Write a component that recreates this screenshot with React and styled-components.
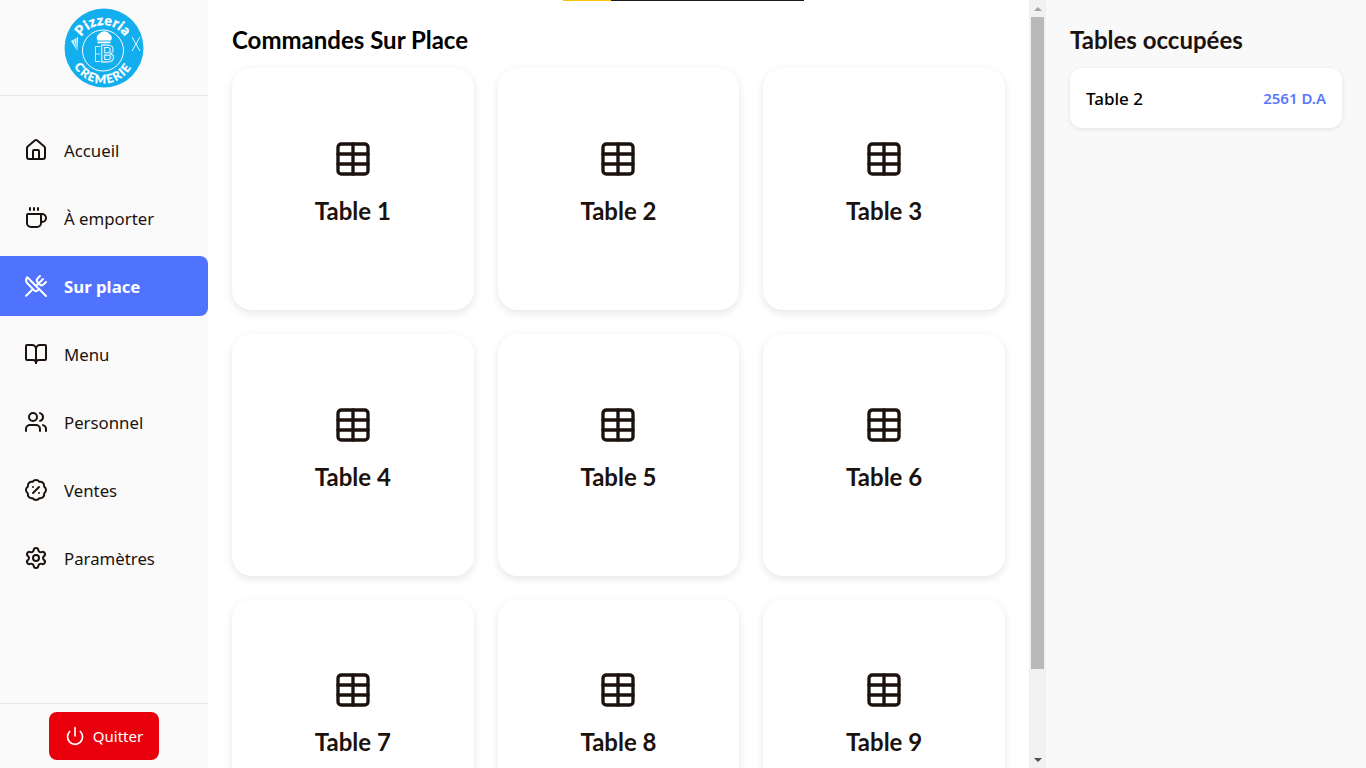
import styled, { createGlobalStyle } from 'styled-components';
import { House, Coffee, UtensilsCrossed, BookOpen, Users, BadgePercent, Settings, Power, Table } from 'lucide-react';

const GlobalStyle = createGlobalStyle`
    html, body {
        margin: 0;
        height: 100%;
        overflow: hidden;
        font-family: "Noto Sans", sans-serif;
        color: #1c120d;
    }
    * {
        box-sizing: border-box;
    }
`

const Page = styled.div`
    display: flex;
    width: 100vw;
    height: 100vh;
    overflow: hidden;
`

const Sidebar = styled.aside`
    width: 208px;
    flex-shrink: 0;
    display: flex;
    flex-direction: column;
    background: #fafafa;
`

const LogoBox = styled.div`
    height: 96px;
    display: flex;
    align-items: center;
    justify-content: center;
    padding-top: 1px;
    border-bottom: 1px solid #e6e6e6;
`

const Nav = styled.nav`
    flex: 1;
    display: flex;
    flex-direction: column;
    gap: 8px;
    padding-top: 24px;
`

const NavItem = styled.a`
    height: 60px;
    display: flex;
    align-items: center;
    gap: 16px;
    padding-left: 24px;
    border-radius: ${props => props.$active ? '0 8px 8px 0' : '0'};
    background: ${props => props.$active ? '#4f72ff' : 'transparent'};
    color: ${props => props.$active ? '#fff' : '#1c120d'};
    font-size: 16.8px;
    font-weight: ${props => props.$active ? 700 : 400};
`

const SidebarFooter = styled.div`
    height: 65px;
    display: flex;
    justify-content: center;
    padding-top: 8px;
    border-top: 1px solid #e6e6e6;
`

const QuitButton = styled.button`
    width: 110px;
    height: 48px;
    display: flex;
    align-items: center;
    justify-content: center;
    gap: 8px;
    border: 0;
    border-radius: 8px;
    background: #ea000d;
    color: #fff;
    font-family: inherit;
    font-size: 15px;
`

const MainArea = styled.div`
    width: 838px;
    flex-shrink: 0;
    display: flex;
    height: 100vh;
`

const Main = styled.main`
    flex: 1;
    min-width: 0;
    overflow-y: scroll;
    scrollbar-width: none;
    padding: 24px;
    background: #fff;
`

const ScrollRail = styled.div`
    width: 17px;
    flex-shrink: 0;
    display: flex;
    flex-direction: column;
    background: #f1f1f1;
`

const ScrollArrow = styled.div`
    height: 17px;
    display: flex;
    align-items: center;
    justify-content: center;

    &::before {
        content: '';
        border-left: 4px solid transparent;
        border-right: 4px solid transparent;
        border-${props => props.$down ? 'top' : 'bottom'}: 4px solid ${props => props.$down ? '#505050' : '#a3a3a3'};
    }
`

const ScrollTrack = styled.div`
    flex: 1;
    padding: 0 2px;
`

const ScrollThumb = styled.div`
    height: 652px;
    background: #b9b9b9;
`

const Title = styled.h2`
    margin: 0 0 12px;
    font-family: Lato, sans-serif;
    font-size: 24px;
    line-height: 32px;
    font-weight: 700;
    color: ${props => props.$soft ? '#1c120d' : '#000'};
`

const TablesGrid = styled.div`
    display: grid;
    grid-template-columns: repeat(3, 1fr);
    gap: 23.5px 24px;
`

const TableCard = styled.div`
    height: 242px;
    display: flex;
    flex-direction: column;
    align-items: center;
    justify-content: center;
    gap: 14px;
    padding-bottom: 10px;
    border-radius: 20px;
    background: #fff;
    box-shadow: 0 3px 8px rgba(0, 0, 0, 0.1);
`

const TableName = styled.span`
    font-family: Lato, sans-serif;
    font-size: 24px;
    line-height: 36px;
    font-weight: 700;
`

const RightPanel = styled.aside`
    flex: 1;
    padding: 24px 24px 0 24px;
    background: #f9f9f9;
`

const OccupiedCard = styled.div`
    height: 60px;
    display: flex;
    align-items: center;
    justify-content: space-between;
    padding: 0 16px;
    border-radius: 12px;
    background: #fff;
    box-shadow: 0 1px 4px rgba(0, 0, 0, 0.1);
`

const OccupiedName = styled.span`
    font-size: 17px;
    font-weight: 500;
    color: #000;
`

const OccupiedPrice = styled.span`
    font-size: 15px;
    font-weight: 600;
    color: #5b78fb;
`

const ToastBar = styled.div`
    position: fixed;
    top: 0;
    left: 563px;
    width: 241px;
    height: 1px;
    background: linear-gradient(90deg, #ffc107 48px, #1a1a1a 48px);
`

function Logo() {
    return (
        <svg width="80" height="80" viewBox="0 0 80 80">
            <defs>
                <path id="arcTop" d="M13.5 42.5 A25.5 25.5 0 0 1 64.5 42.5" />
                <path id="arcBottom" d="M6 42.5 A33 33 0 0 0 72 42.5" />
            </defs>
            <circle cx="40" cy="40" r="39.5" fill="#12aeee" />
            <circle cx="39" cy="42.5" r="20.5" fill="none" stroke="#fff" strokeWidth="1" />
            <text fontFamily="Lato, sans-serif" fontWeight="900" fontSize="14" fill="#fff" stroke="#fff" strokeWidth="0.3" letterSpacing="0.3">
                <textPath href="#arcTop" startOffset="50%" textAnchor="middle">Pizzeria</textPath>
            </text>
            <text fontFamily="Lato, sans-serif" fontWeight="900" fontSize="12" fill="#fff" stroke="#fff" strokeWidth="0.2" letterSpacing="1.4">
                <textPath href="#arcBottom" startOffset="50%" textAnchor="middle">CREMERIE</textPath>
            </text>
            <path d="M33.5 32.5 a4.5 4.5 0 0 1 1.5-6.5 a6.5 6.5 0 0 1 10.5 0 a4.5 4.5 0 0 1 1.5 6.5 z" fill="#fff" />
            <rect x="33.5" y="33.5" width="13" height="1.8" fill="#fff" />
            <text x="43" y="54" textAnchor="middle" fontFamily="Lato, sans-serif" fontWeight="700" fontSize="22" fill="none" stroke="#fff" strokeWidth="0.9">B</text>
            <path d="M36 38.5 H31.5 V53.5 H36 M36 46 H31.5" fill="none" stroke="#fff" strokeWidth="0.8" />
            <path d="M68 29 L76 43 M76 29 L68 43" stroke="#fff" strokeWidth="0.9" fill="none" />
            <path d="M7 33 L14 29 L14 44 Z" fill="#fff" opacity="0.85" />
            <path d="M9.5 31.5 L14 44 M12 30 L14 44" stroke="#12aeee" strokeWidth="0.6" fill="none" />
        </svg>
    )
}

const navigation = [
    { nom: 'Accueil', icone: House },
    { nom: 'À emporter', icone: Coffee },
    { nom: 'Sur place', icone: UtensilsCrossed, actif: true },
    { nom: 'Menu', icone: BookOpen },
    { nom: 'Personnel', icone: Users },
    { nom: 'Ventes', icone: BadgePercent },
    { nom: 'Paramètres', icone: Settings },
]

const tables = [1, 2, 3, 4, 5, 6, 7, 8, 9]

function App() {
    return (
        <Page>
            <GlobalStyle />
            <Sidebar>
                <LogoBox><Logo /></LogoBox>
                <Nav>
                    {navigation.map(item => (
                        <NavItem key={item.nom} $active={item.actif}>
                            <item.icone size={24} strokeWidth={2} />
                            {item.nom}
                        </NavItem>
                    ))}
                </Nav>
                <SidebarFooter>
                    <QuitButton><Power size={20} strokeWidth={2} />Quitter</QuitButton>
                </SidebarFooter>
            </Sidebar>
            <MainArea>
                <Main>
                    <Title>Commandes Sur Place</Title>
                    <TablesGrid>
                        {tables.map(numero => (
                            <TableCard key={numero}>
                                <Table size={40} strokeWidth={2} />
                                <TableName>Table {numero}</TableName>
                            </TableCard>
                        ))}
                    </TablesGrid>
                </Main>
                <ScrollRail>
                    <ScrollArrow />
                    <ScrollTrack><ScrollThumb /></ScrollTrack>
                    <ScrollArrow $down />
                </ScrollRail>
            </MainArea>
            <RightPanel>
                <Title $soft>Tables occupées</Title>
                <OccupiedCard>
                    <OccupiedName>Table 2</OccupiedName>
                    <OccupiedPrice>2561 D.A</OccupiedPrice>
                </OccupiedCard>
            </RightPanel>
            <ToastBar />
        </Page>
    )
}

export default App
